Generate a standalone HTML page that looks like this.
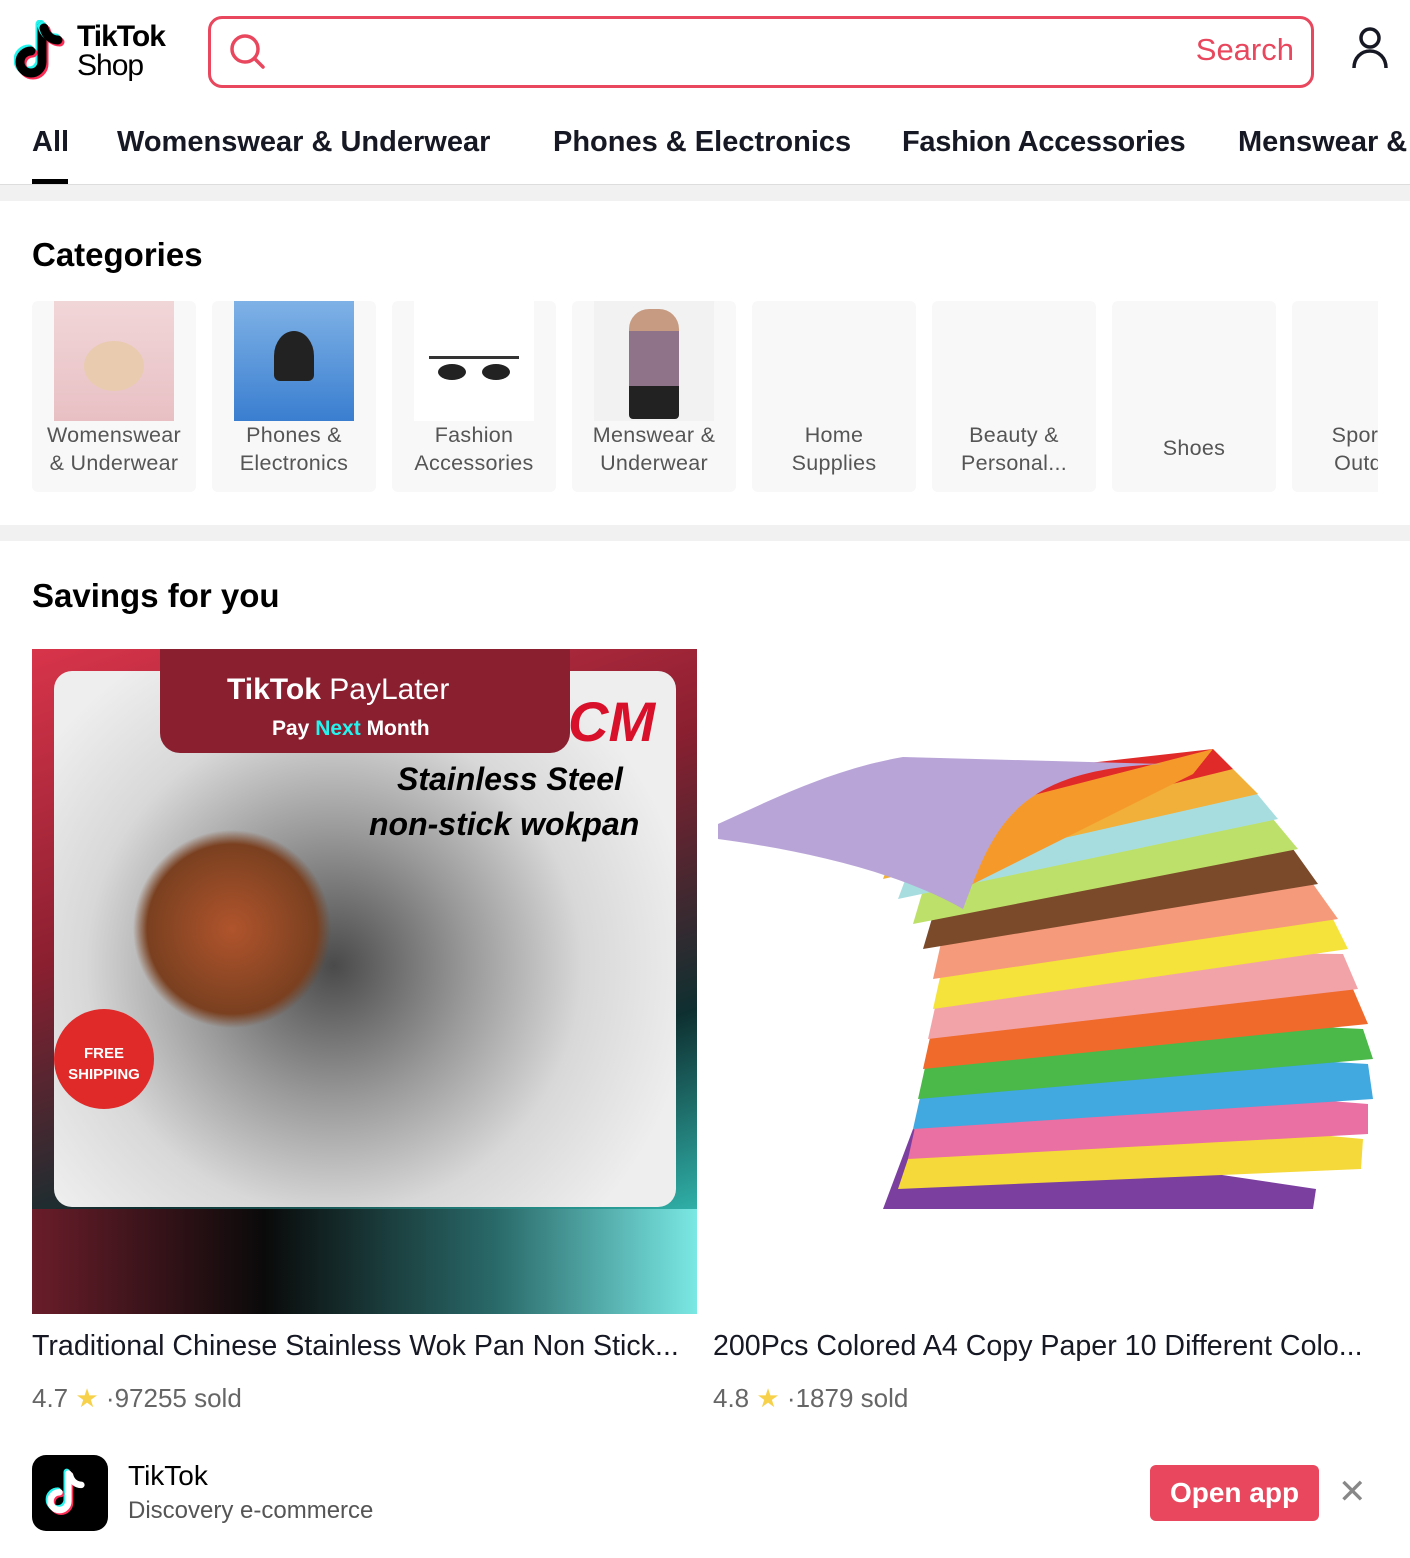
<!DOCTYPE html>
<html><head><meta charset="utf-8"><style>
*{margin:0;padding:0;box-sizing:border-box}
body{width:1410px;height:1558px;overflow:hidden;background:#fff;font-family:"Liberation Sans",Arial,sans-serif;color:#000;position:relative}
.abs{position:absolute}
.tab{position:absolute;top:126px;font-size:29px;font-weight:bold;color:#161823;white-space:nowrap}
.tile{position:absolute;top:301px;width:164px;height:191px;background:#f8f8f8;border-radius:6px;text-align:center;color:#555;font-size:21.5px;line-height:28px;overflow:hidden;letter-spacing:0.3px}
.tile .im{width:120px;height:120px;margin:0 auto}
</style></head><body>
<!-- header -->
<svg class="abs" style="left:14px;top:20px" width="60" height="64" viewBox="0 0 60 64">
<g fill="none" stroke-width="9" stroke-linecap="round">
<path d="M28 6v36a11 11 0 1 1-11-11" stroke="#25f4ee" transform="translate(-2,-2)"/>
<path d="M28 6v36a11 11 0 1 1-11-11" stroke="#fe2c55" transform="translate(2,2)"/>
<path d="M28 6v36a11 11 0 1 1-11-11" stroke="#000"/>
<path d="M30 8c2 8 8 12 14 12" stroke="#25f4ee" transform="translate(-2,-2)"/>
<path d="M30 8c2 8 8 12 14 12" stroke="#fe2c55" transform="translate(2,2)"/>
<path d="M30 8c2 8 8 12 14 12" stroke="#000"/>
</g></svg>
<div class="abs" style="left:77px;top:22px;font-size:30px;font-weight:bold;line-height:30px;letter-spacing:-1px">TikTok</div>
<div class="abs" style="left:77px;top:50px;font-size:30px;line-height:32px;letter-spacing:-1px">Shop</div>
<div class="abs" style="left:208px;top:16px;width:1106px;height:72px;border:3px solid #e8475d;border-radius:14px"></div>
<svg class="abs" style="left:228px;top:32px" width="40" height="40" viewBox="0 0 40 40"><circle cx="17" cy="17" r="13" fill="none" stroke="#e8475d" stroke-width="3.5"/><path d="M26.5 26.5L35 35" stroke="#e8475d" stroke-width="3.5" stroke-linecap="round"/></svg>
<div class="abs" style="right:116px;top:32px;font-size:31px;color:#e8475d">Search</div>
<svg class="abs" style="left:1350px;top:24px" width="40" height="48" viewBox="0 0 40 48"><circle cx="20" cy="14" r="9" fill="none" stroke="#161823" stroke-width="3.5"/><path d="M4 44c0-10 7-17 16-17s16 7 16 17" fill="none" stroke="#161823" stroke-width="3.5"/></svg>
<div class="tab" style="left:32px">All</div>
<div class="abs" style="left:32px;top:179px;width:36px;height:5px;background:#000"></div>
<div class="tab" style="left:117px">Womenswear &amp; Underwear</div>
<div class="tab" style="left:553px">Phones &amp; Electronics</div>
<div class="tab" style="left:902px;letter-spacing:-0.3px">Fashion Accessories</div>
<div class="tab" style="left:1238px">Menswear &amp;</div>
<div class="abs" style="left:0;top:184px;width:1410px;height:17px;background:#f1f1f1;border-top:1px solid #ddd"></div>
<!-- categories -->
<div class="abs" style="left:32px;top:236px;font-size:33px;font-weight:bold">Categories</div>
<div class="tile" style="left:32px"><div class="im" style="background:linear-gradient(#f1d6d8,#e8c0c4)"><div style="width:60px;height:50px;margin:0 auto;position:relative;top:40px;border-radius:50%;background:#e9cbb0"></div></div><div>Womenswear<br>&amp; Underwear</div></div>
<div class="tile" style="left:212px"><div class="im" style="background:linear-gradient(#7fb2e6,#3a7ed0)"><div style="width:40px;height:50px;margin:0 auto;position:relative;top:30px;background:#222;border-radius:50% 50% 6px 6px"></div></div><div>Phones &amp;<br>Electronics</div></div>
<div class="tile" style="left:392px"><div class="im" style="background:#fff"><div style="width:90px;height:20px;margin:0 auto;position:relative;top:55px;border-top:3px solid #333;"><span style="display:inline-block;width:28px;height:16px;background:#222;border-radius:50%;margin-right:16px"></span><span style="display:inline-block;width:28px;height:16px;background:#222;border-radius:50%"></span></div></div><div>Fashion<br>Accessories</div></div>
<div class="tile" style="left:572px"><div class="im" style="background:#f2f2f2"><div style="width:50px;height:110px;margin:0 auto;position:relative;top:8px;background:linear-gradient(#c79b82 0 20%,#8f7489 20% 70%,#222 70%);border-radius:20px 20px 4px 4px"></div></div><div>Menswear &amp;<br>Underwear</div></div>
<div class="tile" style="left:752px"><div class="im"></div><div>Home<br>Supplies</div></div>
<div class="tile" style="left:932px"><div class="im"></div><div>Beauty &amp;<br>Personal...</div></div>
<div class="tile" style="left:1112px"><div class="im" style="height:133px"></div><div>Shoes</div></div>
<div class="abs" style="left:1292px;top:301px;width:86px;height:191px;overflow:hidden"><div class="tile" style="left:0;top:0"><div class="im"></div><div>Sports &amp;<br>Outdoor</div></div></div>
<div class="abs" style="left:0;top:525px;width:1410px;height:16px;background:#f1f1f1"></div>
<!-- savings -->
<div class="abs" style="left:32px;top:577px;font-size:33px;font-weight:bold">Savings for you</div>
<div class="abs" style="left:32px;top:649px;width:665px;height:665px;background:linear-gradient(90deg,#6a1d2a,#0a0a0a 35%,#2a6a6a 70%,#7ae8e4);overflow:hidden">
 <div class="abs" style="left:0;top:0;width:665px;height:560px;background:linear-gradient(160deg,#d8344a,#8a1f30 40%,#0e2f30 75%,#2fb0a8)"></div>
 <div class="abs" style="left:22px;top:22px;width:622px;height:536px;border-radius:18px;background:radial-gradient(circle at 45% 55%,#4a4a4a 0,#9a9a9a 30%,#d8d8d8 55%,#eee 80%)"></div>
 <div class="abs" style="left:100px;top:180px;width:200px;height:200px;border-radius:50%;background:radial-gradient(#b0542c,#7a4020 60%,transparent 70%)"></div>
 <div class="abs" style="left:128px;top:0;width:410px;height:104px;background:#8a1f30;border-radius:0 0 20px 20px"></div>
 <div class="abs" style="left:195px;top:24px;color:#fff;font-size:30px;font-weight:bold">TikTok <span style="font-weight:normal">PayLater</span></div>
 <div class="abs" style="left:240px;top:68px;color:#fff;font-size:21px;font-weight:bold">Pay <span style="color:#25f4ee">Next</span> Month</div>
 <div class="abs" style="left:536px;top:40px;color:#d8102a;font-size:56px;font-weight:bold;font-style:italic">CM</div>
 <div class="abs" style="left:365px;top:112px;font-size:32px;font-weight:bold;font-style:italic">Stainless Steel</div>
 <div class="abs" style="left:337px;top:157px;font-size:32px;font-weight:bold;font-style:italic">non-stick wokpan</div>
 <div class="abs" style="left:22px;top:360px;width:100px;height:100px;border-radius:50%;background:#e02a2a;color:#fff;font-size:15px;font-weight:bold;text-align:center;padding-top:34px;line-height:21px">FREE<br>SHIPPING</div>
</div>
<svg class="abs" style="left:713px;top:649px" width="665" height="665" viewBox="0 0 665 665">
<polygon points="170,560 600,560 603,540 200,480" fill="#7b3fa0"/>
<polygon points="185,540 648,520 650,490 215,450" fill="#f5d93a"/>
<polygon points="195,510 655,485 655,455 215,420" fill="#ea6fa3"/>
<polygon points="200,480 660,450 655,415 220,390" fill="#41a8e0"/>
<polygon points="205,450 660,410 650,380 225,360" fill="#4bb84a"/>
<polygon points="210,420 655,375 640,340 230,330" fill="#ef6a2b"/>
<polygon points="215,390 645,340 630,305 235,300" fill="#f2a3a8"/>
<polygon points="220,360 635,300 620,270 240,270" fill="#f5e23a"/>
<polygon points="220,330 625,270 600,235 240,240" fill="#f59a7a"/>
<polygon points="210,300 605,235 580,200 235,215" fill="#7b4a2a"/>
<polygon points="200,275 585,200 560,170 225,190" fill="#bde06a"/>
<polygon points="185,250 565,170 540,140 215,170" fill="#a8dde0"/>
<polygon points="170,230 545,145 520,120 200,150" fill="#f1b03a"/>
<polygon points="155,210 520,120 500,100 190,135" fill="#e02a2a"/>
<polygon points="130,195 500,100 480,125 250,240" fill="#f59a2a"/>
<path d="M5,175 C60,150 120,120 190,108 L450,115 C300,120 280,180 250,260 C180,220 80,200 5,190Z" fill="#b9a4d8"/>
</svg>
<div class="abs" style="left:32px;top:1330px;font-size:28.6px;color:#161823;white-space:nowrap">Traditional Chinese Stainless Wok Pan Non Stick...</div>
<div class="abs" style="left:713px;top:1330px;font-size:28.6px;color:#161823;white-space:nowrap">200Pcs Colored A4 Copy Paper 10 Different Colo...</div>
<div class="abs" style="left:32px;top:1383px;font-size:26px;color:#666">4.7 <span style="color:#f7d14a">★</span> ·97255 sold</div>
<div class="abs" style="left:713px;top:1383px;font-size:26px;color:#666">4.8 <span style="color:#f7d14a">★</span> ·1879 sold</div>
<!-- app banner -->
<div class="abs" style="left:32px;top:1455px;width:76px;height:76px;background:#000;border-radius:14px"></div>
<svg class="abs" style="left:44px;top:1467px" width="52" height="52" viewBox="0 0 60 64">
<g fill="none" stroke-width="8" stroke-linecap="round">
<path d="M28 8v34a11 11 0 1 1-11-11" stroke="#25f4ee" transform="translate(-2,-2)"/>
<path d="M28 8v34a11 11 0 1 1-11-11" stroke="#fe2c55" transform="translate(2,2)"/>
<path d="M28 8v34a11 11 0 1 1-11-11" stroke="#fff"/>
<path d="M30 10c2 8 8 12 14 12" stroke="#fff"/></g></svg>
<div class="abs" style="left:128px;top:1460px;font-size:28px;color:#000">TikTok</div>
<div class="abs" style="left:128px;top:1497px;font-size:24px;color:#555">Discovery e-commerce</div>
<div class="abs" style="left:1150px;top:1465px;width:169px;height:56px;background:#e8475d;border-radius:6px;color:#fff;font-size:28px;font-weight:bold;text-align:center;line-height:56px">Open app</div>
<div class="abs" style="left:1338px;top:1472px;font-size:34px;color:#888">✕</div>
</body></html>
